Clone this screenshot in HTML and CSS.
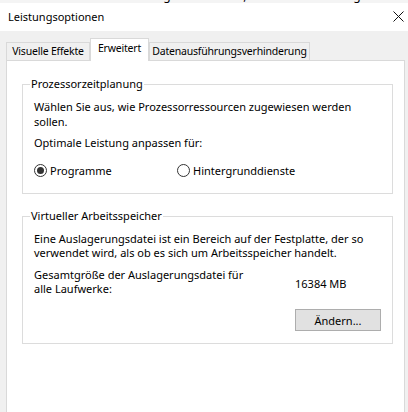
FILE: index.html
```html
<!DOCTYPE html>
<html lang="de">
<head>
<meta charset="utf-8">
<title>Leistungsoptionen</title>
<link rel="stylesheet" href="styles.css">
</head>
<body>
<div class="behind"><span>müssen als Administrator angemeldet sein, um diese Änderungen vorzunehmen.</span></div>
<div class="window">
  <div class="titlebar">
    <span class="title">Leistungsoptionen</span>
    <svg class="close" width="11" height="11" viewBox="0 0 11 11"><path d="M0.5 0.5 L10.5 10.5 M10.5 0.5 L0.5 10.5" stroke="#111" stroke-width="1" fill="none"/></svg>
  </div>
  <div class="body">
    <div class="tabs">
      <div class="tab t-vis">Visuelle Effekte</div>
      <div class="tab t-erw active">Erweitert</div>
      <div class="tab t-dat">Datenausführungsverhinderung</div>
    </div>
    <div class="panel">
      <fieldset class="group g1">
        <legend>Prozessorzeitplanung</legend>
        <p class="txt">Wählen Sie aus, wie Prozessorressourcen zugewiesen werden<br>sollen.</p>
        <p class="txt gap6">Optimale Leistung anpassen für:</p>
        <div class="radios">
          <label class="radio first"><span class="dot checked"></span>Programme</label>
          <label class="radio"><span class="dot"></span>Hintergrunddienste</label>
        </div>
      </fieldset>
      <fieldset class="group g2">
        <legend>Virtueller Arbeitsspeicher</legend>
        <p class="txt t14">Eine Auslagerungsdatei ist ein Bereich auf der Festplatte, der so<br>verwendet wird, als ob es sich um Arbeitsspeicher handelt.</p>
        <div class="sizerow">
          <p class="txt t14 sizelabel">Gesamtgröße der Auslagerungsdatei für<br>alle Laufwerke:</p>
          <span class="sizeval">16384 MB</span>
        </div>
        <div class="btnrow"><button class="btn">Ändern...</button></div>
      </fieldset>
    </div>
  </div>
</div>
</body>
</html>
```
FILE: styles.css
```css
* { box-sizing: border-box; }
html, body { margin: 0; padding: 0; }
body {
  width: 408px;
  height: 412px;
  overflow: hidden;
  background: #f0f0f0;
  font-family: "Noto Sans", "Open Sans", sans-serif;
  font-size: 11px;
  color: #000;
}
.behind {
  height: 3px;
  overflow: hidden;
  background: #f4f4f4;
  white-space: nowrap;
}
.behind span {
  display: block;
  margin-top: -11px;
  line-height: 14px;
  padding-left: 2px;
  font-size: 12px;
}
.titlebar {
  height: 28px;
  background: #fff;
  display: flex;
  align-items: center;
  justify-content: space-between;
  padding: 0 4px 0 8px;
}
.title { font-size: 11px; margin-top: -2px; }
.close { display: block; margin-top: -2px; }
.body {
  padding: 7px 3px 0 6px;
}
.tabs {
  display: flex;
  align-items: flex-end;
  height: 22px;
}
.tab {
  height: 18px;
  line-height: 16px;
  border: 1px solid #d9d9d9;
  border-bottom: none;
  padding: 0;
  text-align: center;
  background: #f0f0f0;
  white-space: nowrap;
  font-size: 10.5px;
  letter-spacing: -0.2px;
}
.t-vis { width: 84px; }
.t-erw { width: 59px; }
.t-dat { width: 161px; }
.tab.active {
  height: 23px;
  margin-bottom: -1px;
  background: #fff;
  line-height: 19px;
  position: relative;
  z-index: 1;
}
.panel {
  background: #fff;
  border: 1px solid #d9d9d9;
  height: 360px;
  padding: 15px 11px 0 15px;
}
.group {
  margin: 0;
  border: 1px solid #dcdcdc;
  padding: 0 11px;
  min-width: 0;
}
.group legend {
  padding: 0 1px;
  margin-left: -4px;
  line-height: 16px;
}
.g1 { padding-top: 7px; padding-bottom: 15px; }
.g2 { margin-top: 14px; padding-top: 8px; padding-bottom: 12px; }
.txt {
  margin: 0;
  line-height: 15px;
  white-space: nowrap;
}
.t14 { line-height: 14px; }
.gap6 { margin-top: 6px; }
.radios {
  display: flex;
  margin-top: 12px;
  height: 16px;
  align-items: center;
}
.radio {
  display: flex;
  align-items: center;
  gap: 3px;
}
.radio.first { width: 143px; }
.dot {
  width: 13px;
  height: 13px;
  border: 1px solid #333;
  border-radius: 50%;
  display: flex;
  align-items: center;
  justify-content: center;
}
.dot.checked::after {
  content: "";
  width: 7px;
  height: 7px;
  border-radius: 50%;
  background: #333;
}
.sizerow {
  display: flex;
  align-items: center;
  margin-top: 8px;
}
.sizelabel { width: 261px; }
.sizeval { padding-top: 3px; }
.btnrow {
  display: flex;
  justify-content: flex-end;
  margin-top: 13px;
}
.btn {
  width: 86px;
  height: 22px;
  border: 1px solid #adadad;
  background: #e1e1e1;
  font: inherit;
  color: #000;
  padding: 0;
}
```
